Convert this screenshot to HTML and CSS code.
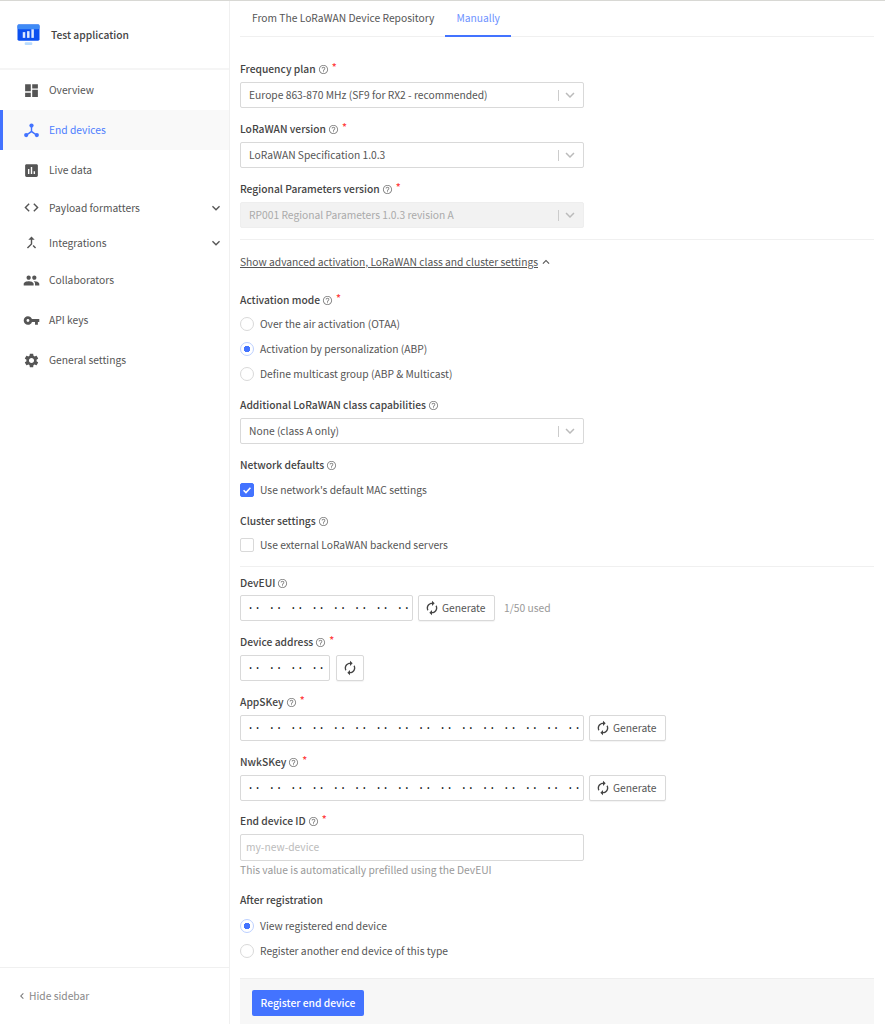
FILE: index.html
```html
<!DOCTYPE html>
<html lang="en">
<head>
<meta charset="utf-8">
<title>Test application</title>
<link rel="stylesheet" href="styles.css">
</head>
<body>
<svg class="defs" aria-hidden="true">
  <symbol id="i-help" viewBox="0 0 24 24"><path d="M11 18h2v-2h-2v2zm1-16C6.48 2 2 6.48 2 12s4.48 10 10 10 10-4.48 10-10S17.52 2 12 2zm0 18c-4.41 0-8-3.59-8-8s3.59-8 8-8 8 3.59 8 8-3.59 8-8 8zm0-14c-2.21 0-4 1.79-4 4h2c0-1.1.9-2 2-2s2 .9 2 2c0 2-3 1.75-3 5h2c0-2.25 3-2.5 3-5 0-2.21-1.79-4-4-4z"/></symbol>
  <symbol id="i-renew" viewBox="0 0 24 24"><path d="M12 6v3l4-4-4-4v3c-4.42 0-8 3.58-8 8 0 1.57.46 3.03 1.24 4.26L6.7 14.8c-.45-.83-.7-1.79-.7-2.8 0-3.31 2.69-6 6-6zm6.76 1.74L17.3 9.2c.44.84.7 1.79.7 2.8 0 3.31-2.69 6-6 6v-3l-4 4 4 4v-3c4.42 0 8-3.58 8-8 0-1.57-.46-3.03-1.24-4.26z"/></symbol>
  <symbol id="i-down" viewBox="0 0 24 24"><path d="M7.41 8.59 12 13.17l4.59-4.58L18 10l-6 6-6-6z"/></symbol>
</svg>
<div class="app">
  <aside class="sidebar">
    <header class="brand">
      <svg class="brand-logo" viewBox="0 0 24 23">
        <rect x="0.5" y="0.5" width="23" height="17" rx="1.5" fill="#0b50f0"/>
        <rect x="0.5" y="0.5" width="23" height="5" rx="1.5" fill="#3f8bf5"/>
        <rect x="6" y="8.5" width="2.6" height="6" fill="#dbe8ff"/>
        <rect x="10.5" y="7.5" width="2.6" height="7" fill="#dbe8ff"/>
        <rect x="15" y="5.5" width="2.6" height="9" fill="#dbe8ff"/>
        <rect x="8" y="19" width="8" height="3" rx="1" fill="#b9dcff"/>
      </svg>
      <span class="brand-name">Test application</span>
    </header>
    <nav class="nav">
      <a class="nav-item"><svg class="nav-icon" viewBox="0 0 24 24"><path d="M3 13h8V3H3v10zm0 8h8v-6H3v6zm10 0h8V11h-8v10zm0-18v6h8V3h-8z"/></svg>Overview</a>
      <a class="nav-item nav-active"><svg class="nav-icon" viewBox="0 0 24 24"><circle cx="12" cy="5" r="3"/><circle cx="4.5" cy="18.5" r="3"/><circle cx="19.5" cy="18.5" r="3"/><path d="M11 5h2v7.6l6.6 5-1.2 1.6L12 14.9l-6.400 4.300-1.200-1.600L11 12.600z"/></svg>End devices</a>
      <a class="nav-item"><svg class="nav-icon" viewBox="0 0 24 24"><path d="M19 3H5c-1.100 0-2 .9-2 2v14c0 1.100.9 2 2 2h14c1.100 0 2-.9 2-2V5c0-1.100-.9-2-2-2zM9 17H7v-7h2v7zm4 0h-2V7h2v10zm4 0h-2v-4h2v4z"/></svg>Live data</a>
      <a class="nav-item nav-sub"><svg class="nav-icon" viewBox="0 0 24 24"><path d="M9.400 16.600 4.800 12l4.600-4.600L8 6l-6 6 6 6 1.400-1.400zm5.200 0 4.600-4.600-4.600-4.600L16 6l6 6-6 6-1.400-1.400z"/></svg>Payload formatters<svg class="nav-caret"><use href="#i-down"/></svg></a>
      <a class="nav-item nav-sub"><svg class="nav-icon" viewBox="0 0 24 24"><path d="M17 20.410 18.410 19 15 15.590 13.590 17 17 20.410zM7.500 8H11v5.590L5.590 19 7 20.410l6-6V8h3.500L12 3.500 7.500 8z"/></svg>Integrations<svg class="nav-caret"><use href="#i-down"/></svg></a>
      <a class="nav-item"><svg class="nav-icon" viewBox="0 0 24 24"><path d="M16 11c1.660 0 2.990-1.340 2.990-3S17.660 5 16 5c-1.660 0-3 1.340-3 3s1.340 3 3 3zm-8 0c1.660 0 2.990-1.340 2.990-3S9.660 5 8 5C6.340 5 5 6.340 5 8s1.340 3 3 3zm0 2c-2.330 0-7 1.170-7 3.500V19h14v-2.500c0-2.330-4.670-3.500-7-3.500zm8 0c-.29 0-.62.02-.97.05 1.160.84 1.970 1.970 1.970 3.450V19h6v-2.500c0-2.330-4.670-3.500-7-3.500z"/></svg>Collaborators</a>
      <a class="nav-item"><svg class="nav-icon" viewBox="0 0 24 24"><path d="M12.650 10C11.830 7.670 9.610 6 7 6c-3.310 0-6 2.690-6 6s2.690 6 6 6c2.610 0 4.830-1.670 5.650-4H17v4h4v-4h2v-4H12.650zM7 14c-1.100 0-2-.9-2-2s.9-2 2-2 2 .9 2 2-.9 2-2 2z"/></svg>API keys</a>
      <a class="nav-item"><svg class="nav-icon" viewBox="0 0 24 24"><path d="M19.140 12.940c.04-.3.06-.61.06-.94 0-.32-.02-.64-.07-.94l2.030-1.580c.18-.14.23-.41.12-.61l-1.920-3.320c-.12-.22-.37-.29-.59-.22l-2.390.96c-.5-.38-1.030-.7-1.620-.94l-.36-2.540c-.04-.24-.24-.41-.48-.41h-3.840c-.24 0-.43.17-.47.41l-.36 2.540c-.59.24-1.130.57-1.620.94l-2.390-.96c-.22-.08-.47 0-.59.22L2.740 8.870c-.12.21-.08.47.12.61l2.030 1.580c-.05.3-.09.63-.09.94s.02.64.07.94l-2.030 1.580c-.18.14-.23.41-.12.61l1.920 3.320c.12.22.37.29.59.22l2.390-.96c.5.38 1.030.7 1.620.94l.36 2.540c.05.24.24.41.48.41h3.840c.24 0 .44-.17.47-.41l.36-2.540c.59-.24 1.130-.56 1.620-.94l2.390.96c.22.08.47 0 .59-.22l1.920-3.320c.12-.22.07-.47-.12-.61l-2.010-1.580zM12 15.600c-1.980 0-3.600-1.620-3.600-3.600s1.620-3.600 3.600-3.600 3.600 1.620 3.600 3.600-1.620 3.600-3.600 3.600z"/></svg>General settings</a>
    </nav>
    <footer class="hide-bar"><svg class="hide-icon" viewBox="0 0 24 24"><path d="M15.410 7.410 14 6l-6 6 6 6 1.410-1.410L10.830 12z"/></svg>Hide sidebar</footer>
  </aside>
  <main class="main">
    <div class="tabs">
      <a class="tab">From The LoRaWAN Device Repository</a>
      <a class="tab tab-active">Manually</a>
    </div>
    <form class="form">
      <div class="field">
        <div class="label">Frequency plan<svg class="help"><use href="#i-help"/></svg><span class="req">*</span></div>
        <div class="select"><span class="select-value">Europe 863-870 MHz (SF9 for RX2 - recommended)</span><span class="select-sep"></span><svg class="select-caret"><use href="#i-down"/></svg></div>
      </div>
      <div class="field">
        <div class="label">LoRaWAN version<svg class="help"><use href="#i-help"/></svg><span class="req">*</span></div>
        <div class="select"><span class="select-value">LoRaWAN Specification 1.0.3</span><span class="select-sep"></span><svg class="select-caret"><use href="#i-down"/></svg></div>
      </div>
      <div class="field field-last">
        <div class="label">Regional Parameters version<svg class="help"><use href="#i-help"/></svg><span class="req">*</span></div>
        <div class="select select-disabled"><span class="select-value">RP001 Regional Parameters 1.0.3 revision A</span><span class="select-sep"></span><svg class="select-caret"><use href="#i-down"/></svg></div>
      </div>
      <hr class="rule">
      <div class="toggle"><a class="toggle-link">Show advanced activation, LoRaWAN class and cluster settings</a><svg class="toggle-caret" viewBox="0 0 24 24"><path d="M7.410 15.410 12 10.830l4.590 4.580L18 14l-6-6-6 6z"/></svg></div>
      <div class="field field-radios">
        <div class="label">Activation mode<svg class="help"><use href="#i-help"/></svg><span class="req">*</span></div>
        <div class="choices">
          <div class="choice"><span class="radio"></span>Over the air activation (OTAA)</div>
          <div class="choice"><span class="radio radio-on"></span>Activation by personalization (ABP)</div>
          <div class="choice"><span class="radio"></span>Define multicast group (ABP &amp; Multicast)</div>
        </div>
      </div>
      <div class="field field-class">
        <div class="label">Additional LoRaWAN class capabilities<svg class="help"><use href="#i-help"/></svg></div>
        <div class="select"><span class="select-value">None (class A only)</span><span class="select-sep"></span><svg class="select-caret"><use href="#i-down"/></svg></div>
      </div>
      <div class="field field-check">
        <div class="label">Network defaults<svg class="help"><use href="#i-help"/></svg></div>
        <div class="choice"><span class="check check-on"><svg viewBox="0 0 14 14"><path d="M3 7.200 5.800 10 11 4.300" fill="none" stroke="#fff" stroke-width="1.800"/></svg></span>Use network's default MAC settings</div>
      </div>
      <div class="field field-check field-last">
        <div class="label">Cluster settings<svg class="help"><use href="#i-help"/></svg></div>
        <div class="choice"><span class="check"></span>Use external LoRaWAN backend servers</div>
      </div>
      <hr class="rule rule-b">
      <div class="field field-eui">
        <div class="label">DevEUI<svg class="help"><use href="#i-help"/></svg></div>
        <div class="input-row">
          <div class="input mask mask-8">·· ·· ·· ·· ·· ·· ·· ··</div>
          <button class="btn" type="button"><svg class="btn-icon"><use href="#i-renew"/></svg>Generate</button>
          <span class="used">1/50 used</span>
        </div>
      </div>
      <div class="field">
        <div class="label">Device address<svg class="help"><use href="#i-help"/></svg><span class="req">*</span></div>
        <div class="input-row">
          <div class="input mask mask-4">·· ·· ·· ··</div>
          <button class="btn btn-square" type="button" aria-label="Generate"><svg class="btn-icon"><use href="#i-renew"/></svg></button>
        </div>
      </div>
      <div class="field">
        <div class="label">AppSKey<svg class="help"><use href="#i-help"/></svg><span class="req">*</span></div>
        <div class="input-row">
          <div class="input mask mask-16">·· ·· ·· ·· ·· ·· ·· ·· ·· ·· ·· ·· ·· ·· ·· ··</div>
          <button class="btn" type="button"><svg class="btn-icon"><use href="#i-renew"/></svg>Generate</button>
        </div>
      </div>
      <div class="field">
        <div class="label">NwkSKey<svg class="help"><use href="#i-help"/></svg><span class="req">*</span></div>
        <div class="input-row">
          <div class="input mask mask-16">·· ·· ·· ·· ·· ·· ·· ·· ·· ·· ·· ·· ·· ·· ·· ··</div>
          <button class="btn" type="button"><svg class="btn-icon"><use href="#i-renew"/></svg>Generate</button>
        </div>
      </div>
      <div class="field field-id">
        <div class="label">End device ID<svg class="help"><use href="#i-help"/></svg><span class="req">*</span></div>
        <div class="input input-text">my-new-device</div>
        <div class="hint">This value is automatically prefilled using the DevEUI</div>
      </div>
      <div class="field field-after">
        <div class="label">After registration</div>
        <div class="choices">
          <div class="choice"><span class="radio radio-on"></span>View registered end device</div>
          <div class="choice"><span class="radio"></span>Register another end device of this type</div>
        </div>
      </div>
      <div class="submit-bar"><button class="btn-primary" type="button">Register end device</button></div>
    </form>
  </main>
</div>
</body>
</html>
```
FILE: styles.css
```css
* { box-sizing: border-box; }
html, body { margin: 0; height: 100%; overflow: hidden; }
body {
  background: #fff;
  color: #555;
  font-family: "Noto Sans CJK SC", "Noto Sans", sans-serif;
  font-size: 10.27px;
  line-height: 16px;
}
.defs { display: none; }
.app {
  display: flex;
  height: 1024px;
  border-top: 1px solid #d8d8d4;
}

/* sidebar */
.sidebar {
  width: 230px;
  flex: none;
  display: flex;
  flex-direction: column;
  border-right: 1px solid #f0f0f0;
}
.brand {
  height: 69px;
  flex: none;
  display: flex;
  align-items: center;
  padding: 0 0 0 17px;
  border-bottom: 2px solid #f5f5f5;
}
.brand-logo { width: 23px; height: 22px; margin: 0 11px 0 0; }
.brand-name { margin-top: 1px; font-weight: 500; color: #444; }
.nav { flex: 1; }
.nav-item {
  display: flex;
  align-items: center;
  height: 40px;
  padding: 0 5px 0 23px;
  color: #555;
}
.nav-sub { height: 35px; }
.nav-icon { width: 17px; height: 17px; flex: none; margin-right: 9px; fill: #555; }
.nav-active {
  background: #f9f9f9;
  color: #4d7dff;
  box-shadow: inset 3px 0 0 #4373ff;
}
.nav-active .nav-icon { fill: #4373ff; }
.nav-caret { width: 16px; height: 16px; margin-left: auto; fill: #555; }
.hide-bar {
  flex: none;
  height: 57px;
  display: flex;
  align-items: center;
  padding-left: 16px;
  color: #888;
  border-top: 1px solid #f0f0f0;
}
.hide-icon { width: 12px; height: 12px; margin-right: 1px; fill: #777; }

/* tabs */
.main { flex: 1; min-width: 0; padding: 0 11px 0 10px; }
.tabs {
  display: flex;
  height: 36px;
  border-bottom: 1px solid #f0f0f0;
}
.tab {
  height: 36px;
  padding: 9px 11px 0 12px;
  color: #555;
}
.tab-active {
  padding-left: 11px;
  color: #6d92ff;
  border-bottom: 2px solid #4373ff;
}

/* form */
.form { padding-top: 24px; }
.field { margin-bottom: 13px; }
.field-last { margin-bottom: 0; }
.label {
  display: flex;
  align-items: center;
  height: 16px;
  margin-bottom: 5px;
  color: #444;
  font-weight: 500;
}
.help { width: 11px; height: 11px; margin: 0 0 0 2px; fill: #888; }
.req { color: #f44; margin-left: 3px; position: relative; top: -2px; }
.select {
  width: 344px;
  height: 26px;
  display: flex;
  align-items: center;
  padding: 0 4px 0 8px;
  border: 1px solid #d9d9d9;
  border-radius: 2px;
  color: #555;
}
.select-value { flex: 1; }
.select-sep { width: 1px; height: 11px; background: #ccc; margin-right: 2px; }
.select-caret { width: 18px; height: 18px; fill: #bbb; }
.select-disabled { background: #f2f2f2; border-color: #eee; color: #aaa; }
.rule { height: 1px; margin: 11px 0 0; border: 0; background: #f0f0f0; }
.rule-b { margin: 9px 0 8px; }
.toggle { display: flex; align-items: center; height: 16px; margin: 14px 0 22px; }
.toggle-link { text-decoration: underline; color: #555; }
.toggle-caret { width: 14px; height: 14px; margin-left: 1px; fill: #555; }
.field-radios { margin-bottom: 11px; }
.field-radios .label { margin-bottom: 3px; }
.choices { display: flex; flex-direction: column; }
.choice {
  display: flex;
  align-items: center;
  height: 25px;
  color: #555;
}
.radio, .check {
  width: 14px;
  height: 14px;
  flex: none;
  margin-right: 6px;
  border: 1px solid #d9d9d9;
  background: #fff;
}
.radio { border-radius: 50%; }
.radio-on {
  border-color: #bcd0ff;
  background: radial-gradient(circle, #4373ff 0 3px, #fff 3.500px);
}
.check { border-radius: 2px; }
.check-on { background: #4373ff; border-color: #4373ff; }
.check-on svg { display: block; width: 12px; height: 12px; }
.field-class { margin-bottom: 13px; }
.field-check { margin-bottom: 11px; }
.field-check .label { margin-bottom: 4px; }
.field-check .choice { height: 25px; }
.field-check.field-last { margin-bottom: 0; }
.field-check.field-last .label { margin-bottom: 3px; }
.field-eui .label { margin-bottom: 4px; }
.input-row { display: flex; align-items: center; gap: 6px; }
.input {
  height: 26px;
  border: 1px solid #d9d9d9;
  border-radius: 2px;
  background: #fff;
}
.mask {
  padding: 0 0 0 6px;
  overflow: hidden;
  white-space: nowrap;
  font-family: "Liberation Mono", monospace;
  font-size: 11.850px;
  line-height: 27px;
  color: #222;
}
.mask-8 { width: 173px; margin-right: -1px; }
.mask-4 { width: 90px; }
.mask-16 { width: 344px; margin-right: -1px; }
.btn {
  height: 26px;
  width: 77px;
  display: flex;
  align-items: center;
  justify-content: flex-start;
  padding: 0 0 0 5px;
  border: 1px solid #d9d9d9;
  border-radius: 2px;
  background: #fff;
  color: #555;
  font: inherit;
  box-shadow: 0 1px 1px rgba(0,0,0,.05);
}
.btn-square { width: 28px; justify-content: center; padding: 0; }
.btn-icon { width: 16px; height: 16px; flex: none; fill: #444; }
.btn .btn-icon { margin-right: 2px; }
.btn-square .btn-icon { margin-right: 0; }
.used { color: #999; margin-left: 3px; }
.input-text {
  width: 344px;
  padding: 0 0 0 5px;
  line-height: 24px;
  color: #bbb;
}
.hint { color: #999; margin-top: 1px; }
.field-id { margin-top: -1px; margin-bottom: 14px; }
.field-id .input-text { height: 27px; }
.field-after .label { margin-bottom: 5px; }
.field-after { margin-bottom: 0; }
.submit-bar {
  margin-top: 15px;
  height: 46px;
  padding: 11px 0 0 12px;
  background: #f7f7f7;
  border-top: 1px solid #eee;
}
.btn-primary {
  display: block;
  width: 112px;
  height: 26px;
  padding: 0;
  border: 0;
  border-radius: 2px;
  background: #4373ff;
  color: #fff;
  font: inherit;
  font-weight: 500;
}
```
